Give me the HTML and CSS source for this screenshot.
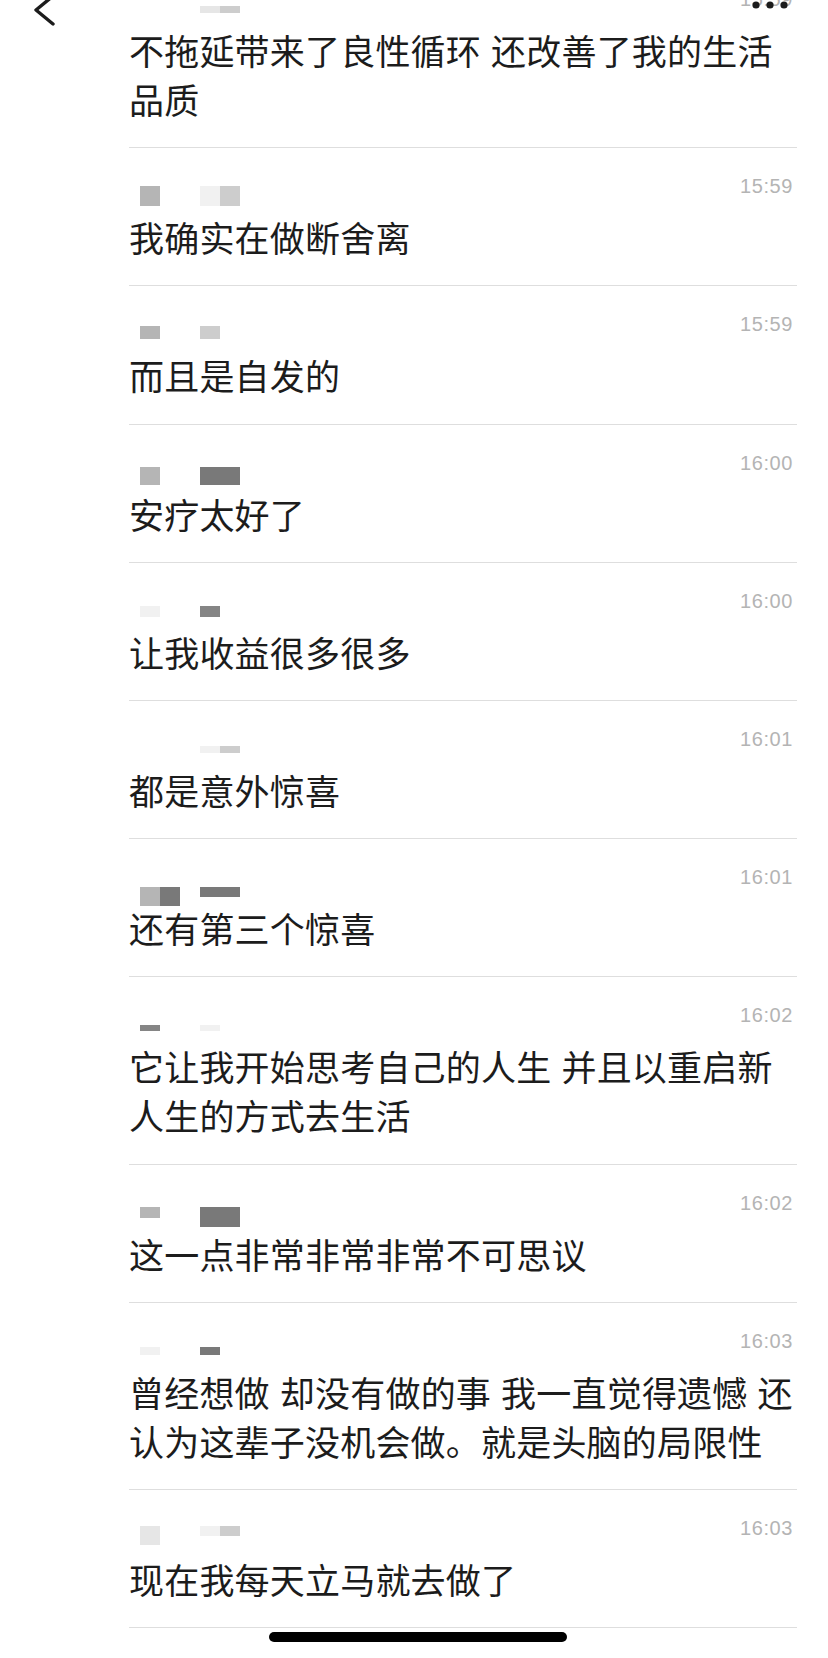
FILE: index.html
```html
<!DOCTYPE html>
<html lang="zh-CN">
<head>
  <meta charset="UTF-8">
  <meta name="viewport" content="width=device-width, initial-scale=1.0">
  <title>聊天记录</title>
  <link rel="stylesheet" href="styles.css">
</head>
<body>

  <div class="nav">
    <svg class="back" width="30" height="30" viewBox="0 0 30 30">
      <polyline points="19,-4 2,10 19,24" fill="none" stroke="#1c1c1c" stroke-width="3.4" stroke-linecap="round" stroke-linejoin="round"/>
    </svg>
    <svg class="more" width="44" height="12" viewBox="0 0 44 12">
      <circle cx="8" cy="5" r="3.6" fill="#1c1c1c"/>
      <circle cx="22" cy="5" r="3.6" fill="#1c1c1c"/>
      <circle cx="36" cy="5" r="3.6" fill="#1c1c1c"/>
    </svg>
  </div>

  <ul class="chat">
    <li class="msg">
      <div class="head">
        <span class="name nm1"><i class="px"></i><i class="px"></i><i class="px"></i><i class="px s-e"></i><i class="px s-c"></i></span>
        <span class="time">15:59</span>
      </div>
      <p class="text">不拖延带来了良性循环 还改善了我的生活品质</p>
    </li>
    <li class="msg">
      <div class="head">
        <span class="name nm2"><i class="px s-b"></i><i class="px"></i><i class="px"></i><i class="px s-f"></i><i class="px s-c"></i></span>
        <span class="time">15:59</span>
      </div>
      <p class="text">我确实在做断舍离</p>
    </li>
    <li class="msg">
      <div class="head">
        <span class="name nm3"><i class="px s-b"></i><i class="px"></i><i class="px"></i><i class="px s-c"></i></span>
        <span class="time">15:59</span>
      </div>
      <p class="text">而且是自发的</p>
    </li>
    <li class="msg">
      <div class="head">
        <span class="name nm4"><i class="px s-b"></i><i class="px"></i><i class="px"></i><i class="px s-7"></i><i class="px s-7"></i></span>
        <span class="time">16:00</span>
      </div>
      <p class="text">安疗太好了</p>
    </li>
    <li class="msg">
      <div class="head">
        <span class="name nm5"><i class="px s-f"></i><i class="px"></i><i class="px"></i><i class="px s-8"></i></span>
        <span class="time">16:00</span>
      </div>
      <p class="text">让我收益很多很多</p>
    </li>
    <li class="msg">
      <div class="head">
        <span class="name nm6"><i class="px"></i><i class="px"></i><i class="px"></i><i class="px s-f"></i><i class="px s-c"></i></span>
        <span class="time">16:01</span>
      </div>
      <p class="text">都是意外惊喜</p>
    </li>
    <li class="msg">
      <div class="head">
        <span class="name nm7"><i class="px s-b"></i><i class="px s-7"></i><i class="px"></i><i class="px s-7 short"></i><i class="px s-7 short"></i></span>
        <span class="time">16:01</span>
      </div>
      <p class="text">还有第三个惊喜</p>
    </li>
    <li class="msg">
      <div class="head">
        <span class="name nm8"><i class="px s-8"></i><i class="px"></i><i class="px"></i><i class="px s-f"></i></span>
        <span class="time">16:02</span>
      </div>
      <p class="text">它让我开始思考自己的人生 并且以重启新人生的方式去生活</p>
    </li>
    <li class="msg">
      <div class="head">
        <span class="name nm9"><i class="px s-b"></i><i class="px"></i><i class="px"></i><i class="px s-7 tall"></i><i class="px s-7 tall"></i></span>
        <span class="time">16:02</span>
      </div>
      <p class="text">这一点非常非常非常不可思议</p>
    </li>
    <li class="msg">
      <div class="head">
        <span class="name nm10"><i class="px s-f"></i><i class="px"></i><i class="px"></i><i class="px s-7"></i></span>
        <span class="time">16:03</span>
      </div>
      <p class="text">曾经想做 却没有做的事 我一直觉得遗憾 还认为这辈子没机会做。就是头脑的局限性</p>
    </li>
    <li class="msg">
      <div class="head">
        <span class="name nm11"><i class="px s-e"></i><i class="px"></i><i class="px"></i><i class="px s-f short"></i><i class="px s-c short"></i></span>
        <span class="time">16:03</span>
      </div>
      <p class="text">现在我每天立马就去做了</p>
    </li>
  </ul>

  <div class="home-bar"></div>

</body>
</html>
```

FILE: styles.css
```css
html, body {
  margin: 0;
  padding: 0;
  background: #fff;
  overflow: hidden;
}

body {
  position: relative;
  height: 1658px;
  font-family: "Noto Sans CJK SC", "Noto Sans", sans-serif;
  color: #1c1c1c;
}

/* top bar, mostly scrolled off */
.nav .back {
  position: absolute;
  left: 34px;
  top: 0;
}

.nav .more {
  position: absolute;
  left: 748px;
  top: 0;
  z-index: 2;
}

.chat {
  list-style: none;
  margin: -39px 0 0 129px;
  padding: 0;
  width: 668px;
}

.msg {
  padding: 26px 0 24.2px;
  border-bottom: 1px solid #dedede;
}

.head {
  display: flex;
  justify-content: space-between;
  align-items: flex-start;
  height: 38px;
  padding-right: 4px;
}

.time {
  font-family: "Liberation Sans", Arial, sans-serif;
  font-size: 20px;
  line-height: 24px;
  letter-spacing: 0.6px;
  color: #b4b4b4;
}

.text {
  margin: 0;
  font-size: 35px;
  line-height: 49px;
  letter-spacing: 0.2px;
  word-spacing: 2px;
}

/* mosaic over the sender name */
.name {
  display: flex;
  margin-left: 11px;
}

.name .px {
  display: block;
  width: 20px;
  height: 100%;
}

.name .short { height: 10px; }
.name .tall { height: 20px; }

.s-f { background: #f1f1f1; }
.s-e { background: #e6e6e6; }
.s-c { background: #cdcdcd; }
.s-b { background: #b5b5b5; }
.s-8 { background: #858585; }
.s-7 { background: #797979; }

.nm1 { margin-top: 19px; height: 7px; }
.nm2 { margin-top: 12px; height: 20px; }
.nm3 { margin-top: 14px; height: 13px; }
.nm4 { margin-top: 16px; height: 18px; }
.nm5 { margin-top: 17px; height: 11px; }
.nm6 { margin-top: 19px; height: 7px; }
.nm7 { margin-top: 22px; height: 19px; }
.nm8 { margin-top: 22px; height: 6px; }
.nm9 { margin-top: 16px; height: 11px; }
.nm10 { margin-top: 18px; height: 8px; }
.nm11 { margin-top: 10px; height: 19px; }

.home-bar {
  position: absolute;
  left: 269px;
  top: 1632px;
  width: 298px;
  height: 10px;
  border-radius: 5px;
  background: #000;
}
```
